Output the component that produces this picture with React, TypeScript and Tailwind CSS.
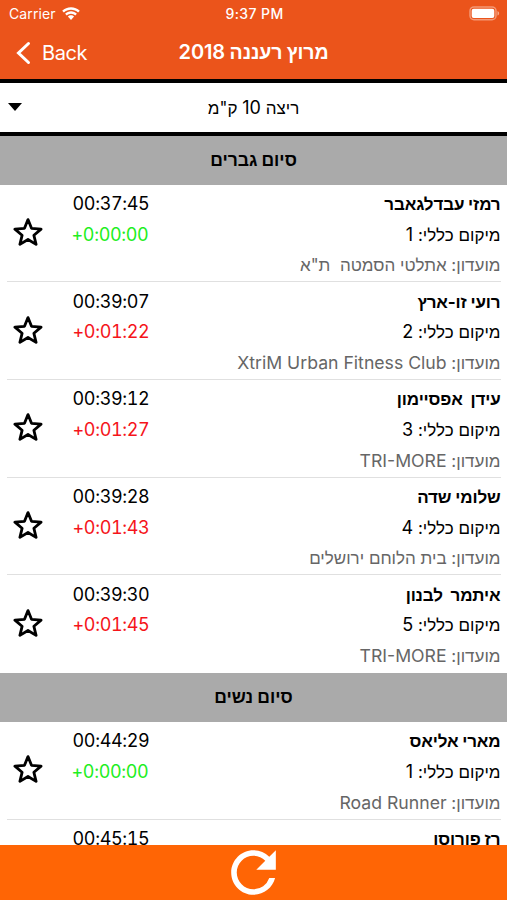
import { MdRefresh } from "react-icons/md";

type Runner = {
  name: string;
  place?: number;
  club?: string;
  time: string;
  gap?: string;
};

const men: Runner[] = [
  { name: "רמזי עבדלגאבר", place: 1, club: 'אתלטי הסמטה  ת"א', time: "00:37:45", gap: "+0:00:00" },
  { name: "רועי זו-ארץ", place: 2, club: "XtriM Urban Fitness Club", time: "00:39:07", gap: "+0:01:22" },
  { name: "עידן  אפסיימון", place: 3, club: "TRI-MORE", time: "00:39:12", gap: "+0:01:27" },
  { name: "שלומי שדה", place: 4, club: "בית הלוחם ירושלים", time: "00:39:28", gap: "+0:01:43" },
  { name: "איתמר  לבנון", place: 5, club: "TRI-MORE", time: "00:39:30", gap: "+0:01:45" },
];

const women: Runner[] = [
  { name: "מארי אליאס", place: 1, club: "Road Runner", time: "00:44:29", gap: "+0:00:00" },
  { name: "רז פורוסו", time: "00:45:15" },
];

const isLatin = (text: string) => /^[A-Za-z]/.test(text);

const Star = () => (
  <svg viewBox="0 0 30 30" className="w-[30px] h-[30px]" fill="none" stroke="black" strokeWidth="2.8" strokeLinejoin="round">
    <path d="M15 2.600l3.500 8.700 9.600.8-7.200 6.200 2.200 9.100-8.100-4.900-8.100 4.900 2.200-9.100-7.200-6.200 9.600-.8z" />
  </svg>
);

const StatusBar = () => (
  <div className="grid grid-cols-3 items-center h-[27px] pl-[9px] pr-[7px] text-[14px]">
    <div className="flex items-center gap-[6px]">
      <span className="tracking-[0.1px]">Carrier</span>
      <svg viewBox="0 0 18 13" className="w-[18px] h-[13px]" fill="white">
        <path d="M9 .2C5.600.2 2.500 1.500.2 3.700l1.700 1.800C3.800 3.700 6.300 2.700 9 2.700s5.200 1 7.100 2.800l1.700-1.800C15.500 1.500 12.400.2 9 .2z" />
        <path d="M9 4.300c-2.300 0-4.400.9-5.900 2.400l1.700 1.800C5.900 7.400 7.400 6.700 9 6.700s3.100.7 4.200 1.800l1.700-1.800C13.400 5.200 11.300 4.300 9 4.300z" />
        <path d="M9 8.300c-1.200 0-2.300.5-3.100 1.300L9 12.900l3.100-3.300C11.300 8.800 10.200 8.300 9 8.300z" />
      </svg>
    </div>
    <span className="text-center font-medium text-[14px] tracking-[0.4px] whitespace-nowrap">9:37 PM</span>
    <svg viewBox="0 0 31 15" className="w-[31px] h-[15px] justify-self-end" fill="none">
      <rect x="1" y="0.900" width="26" height="12.800" rx="4" stroke="white" strokeOpacity="0.4" strokeWidth="1.500" />
      <rect x="2.700" y="2.700" width="22.600" height="9.200" rx="2" fill="white" />
      <path d="M28.500 5v4.600c1-.4 1.600-1.300 1.600-2.300s-.6-1.900-1.600-2.300z" fill="white" fillOpacity="0.500" />
    </svg>
  </div>
);

const Header = () => (
  <header className="bg-[#eb541b] text-white h-[79px]">
    <StatusBar />
    <div className="grid grid-cols-[1fr_auto_1fr] items-center h-[51px] px-[16px]">
      <button className="flex items-center gap-[11px] text-[20px] tracking-[-0.4px]">
        <svg viewBox="0 0 15 24" className="w-[15px] h-[24px]" fill="none" stroke="white" strokeWidth="3" strokeLinecap="round">
          <path d="M12.500 2.500L2.500 12l10 9.500" />
        </svg>
        <span>Back</span>
      </button>
      <h1 dir="rtl" className="text-[19.500px] font-bold whitespace-nowrap tracking-[-0.1px]">
        מרוץ רעננה <span className="font-semibold text-[20px]">2018</span>
      </h1>
    </div>
  </header>
);

const SectionTitle = ({ title }: { title: string }) => (
  <h2 dir="rtl" className="flex items-center justify-center h-[49px] bg-[#aaaaaa] text-[17.500px] font-bold">
    {title}
  </h2>
);

const Row = ({ runner }: { runner: Runner }) => (
  <li className="flex h-[97.700px] mx-[6.500px] pt-[4.500px] border-b border-[#e0e0e0] last:border-transparent leading-[30.700px]">
    <div className="pt-[28px] pl-[6px] w-[66px]">
      <Star />
    </div>
    <div className="whitespace-nowrap text-[18px] tabular-nums tracking-[-0.350px]">
      <p>{runner.time}</p>
      {runner.gap && (
        <p className={runner.place === 1 ? "-ml-px text-[#1eee22]" : "text-[#f5141a]"}>{runner.gap}</p>
      )}
    </div>
    <div dir="rtl" className="flex-1 whitespace-pre text-[17px]">
      <p className="font-bold tracking-[-0.150px]">{runner.name}</p>
      {runner.place && (
        <p>
          מיקום כללי: <span className="text-[18px]">{runner.place}</span>
        </p>
      )}
      {runner.club && (
        <p className="text-[#666666]">
          מועדון: <span className={isLatin(runner.club) ? "text-[17.650px]" : ""}>{runner.club}</span>
        </p>
      )}
    </div>
  </li>
);

const App = () => {
  return (
    <div className="flex flex-col w-full h-[900px] overflow-hidden bg-white text-black font-['Inter','Liberation_Sans',sans-serif]">
      <Header />
      <div className="flex items-center h-[56.500px] px-[8px] border-y-4 border-black">
        <span className="w-0 h-0 border-x-[7px] border-x-transparent border-t-[8px] border-t-black" />
        <span dir="rtl" className="flex-1 text-center text-[17px] pr-[14px]">
          ריצה <span className="text-[18px]">10</span> ק"מ
        </span>
      </div>
      <main className="flex-1 min-h-0 overflow-hidden">
        <SectionTitle title="סיום גברים" />
        <ul>
          {men.map((runner) => (
            <Row key={runner.name} runner={runner} />
          ))}
        </ul>
        <SectionTitle title="סיום נשים" />
        <ul>
          {women.map((runner) => (
            <Row key={runner.name} runner={runner} />
          ))}
        </ul>
      </main>
      <footer className="flex items-center justify-center h-[55px] shrink-0 bg-[#ff6505]">
        <MdRefresh className="text-white text-[67px] shrink-0" />
      </footer>
    </div>
  );
};

export default App;
